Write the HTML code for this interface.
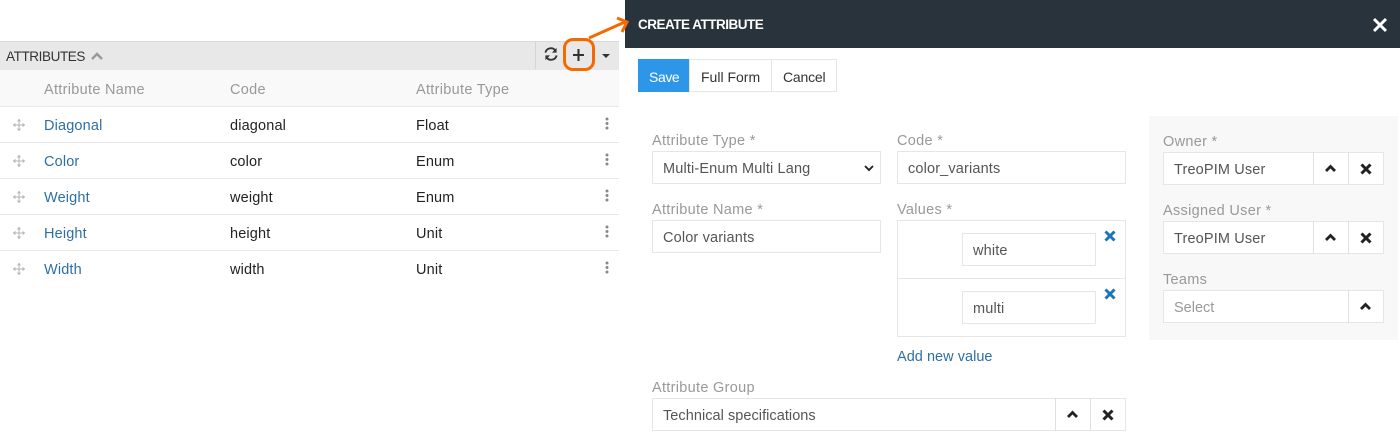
<!DOCTYPE html>
<html><head><meta charset="utf-8"><style>
html,body{margin:0;padding:0;background:#fff}
#p{position:relative;width:1400px;height:446px;overflow:hidden;background:#fff;font-family:"Liberation Sans",sans-serif;font-size:14.5px;color:#333}
#p div,#p span.t{position:absolute;box-sizing:border-box}
.t{white-space:nowrap;line-height:20px;letter-spacing:.15px;margin-top:1px}
.g{color:#999;letter-spacing:.3px}.l{color:#2f6fa5}.d{color:#555}.k{color:#222}
.bt{font-size:14px;letter-spacing:0}
.b{background:#fff;border:1px solid #e6e6e6}
.h{height:1px;background:#e8e8e8;left:0;width:619px}
svg{position:absolute;overflow:visible}
</style></head><body><div id="p">
<div style="left:0;top:41px;width:619px;height:29px;background:#e8e8e8;border-top:1px solid #d9d9d9"></div>
<div style="left:0;top:70px;width:619px;height:36px;background:#f9f9f9"></div>
<div class="h" style="top:106px"></div><div class="h" style="top:142px"></div><div class="h" style="top:178px"></div><div class="h" style="top:214px"></div><div class="h" style="top:250px"></div>
<span class="t" style="left:6px;top:46px;color:#333;font-size:13.5px;letter-spacing:-.4px">ATTRIBUTES</span>
<svg style="left:91px;top:52px" width="12" height="8"><path d="M1 7L6 2L11 7" fill="none" stroke="#999" stroke-width="2.400"/></svg>
<div style="left:535px;top:42px;width:1px;height:27px;background:#d5d5d5"></div>
<svg style="left:544px;top:47px" width="14" height="14" viewBox="0 0 15 15"><path d="M1.500 6A6 6 0 0 1 12 3.500M13.500 9A6 6 0 0 1 3 11.500" fill="none" stroke="#333" stroke-width="2"/><path d="M13.500 1V6H8.500zM1.500 14V9H6.500z" fill="#333"/></svg>
<svg style="left:573px;top:49px" width="11" height="12"><path d="M5.500 0V12M0 6H11" stroke="#333" stroke-width="2.100"/></svg>
<svg style="left:602px;top:54px" width="8" height="4"><path d="M0 0H8L4 4z" fill="#333"/></svg>
<div style="left:563px;top:38px;width:32px;height:33px;border:3px solid #f56a00;border-radius:10px"></div>

<span class="t g" style="left:44px;top:79px">Attribute Name</span><span class="t g" style="left:230px;top:79px">Code</span><span class="t g" style="left:416px;top:79px">Attribute Type</span>

<span class="t l" style="left:44px;top:115px">Diagonal</span><span class="t k" style="left:230px;top:115px">diagonal</span><span class="t k" style="left:416px;top:115px">Float</span>
<span class="t l" style="left:44px;top:151px">Color</span><span class="t k" style="left:230px;top:151px">color</span><span class="t k" style="left:416px;top:151px">Enum</span>
<span class="t l" style="left:44px;top:187px">Weight</span><span class="t k" style="left:230px;top:187px">weight</span><span class="t k" style="left:416px;top:187px">Enum</span>
<span class="t l" style="left:44px;top:223px">Height</span><span class="t k" style="left:230px;top:223px">height</span><span class="t k" style="left:416px;top:223px">Unit</span>
<span class="t l" style="left:44px;top:259px">Width</span><span class="t k" style="left:230px;top:259px">width</span><span class="t k" style="left:416px;top:259px">Unit</span>

<svg width="0" height="0" style="left:0;top:0"><defs>
<g id="mv"><path d="M6 1V11M1 6H11" stroke="#b5b5b5" stroke-width="1" fill="none"/><path d="M4.500 2.500L6 .5L7.500 2.500M4.500 9.500L6 11.500L7.500 9.500M2.500 4.500L.5 6L2.500 7.500M9.500 4.500L11.500 6L9.500 7.500" stroke="#b5b5b5" stroke-width="1" fill="none"/></g>
<g id="dots"><circle cx="2" cy="2" r="1.500" fill="#888"/><circle cx="2" cy="6.500" r="1.500" fill="#888"/><circle cx="2" cy="11" r="1.500" fill="#888"/></g>
<path id="up" d="M1 7L5.500 2.500L10 7" fill="none" stroke="#222" stroke-width="2.800"/>
<path id="x" d="M1.500 1.500L10.500 10.500M10.500 1.500L1.500 10.500" fill="none" stroke="#222" stroke-width="3"/>
</defs></svg>
<svg style="left:13px;top:119px" width="12" height="12"><use href="#mv"/></svg><svg style="left:13px;top:155px" width="12" height="12"><use href="#mv"/></svg><svg style="left:13px;top:191px" width="12" height="12"><use href="#mv"/></svg><svg style="left:13px;top:227px" width="12" height="12"><use href="#mv"/></svg><svg style="left:13px;top:263px" width="12" height="12"><use href="#mv"/></svg>
<svg style="left:605px;top:117px" width="4" height="13"><use href="#dots"/></svg><svg style="left:605px;top:153px" width="4" height="13"><use href="#dots"/></svg><svg style="left:605px;top:189px" width="4" height="13"><use href="#dots"/></svg><svg style="left:605px;top:225px" width="4" height="13"><use href="#dots"/></svg><svg style="left:605px;top:261px" width="4" height="13"><use href="#dots"/></svg>

<div style="left:625px;top:0;width:775px;height:48px;background:#29333b"></div>
<span class="t" style="left:638px;top:14px;color:#fff;font-weight:bold;font-size:13.5px;letter-spacing:-.5px">CREATE ATTRIBUTE</span>
<svg style="left:1373px;top:18px" width="14" height="14"><path d="M1 1L13 13M13 1L1 13" stroke="#fff" stroke-width="3"/></svg>
<svg style="left:585px;top:14px" width="45" height="30"><path d="M4 24L40 8" stroke="#f56a00" stroke-width="3" fill="none"/><path d="M32 4L42 8L37 18" stroke="#f56a00" stroke-width="3" fill="none"/></svg>

<div style="left:638px;top:59px;width:52px;height:33px;background:#2d96e8"></div>
<div class="b" style="left:689px;top:59px;width:83px;height:33px"></div>
<div class="b" style="left:771px;top:59px;width:66px;height:33px"></div>
<span class="t bt" style="left:649px;top:66px;color:#fff;letter-spacing:-.4px">Save</span>
<span class="t bt" style="left:701px;top:66px">Full Form</span>
<span class="t bt" style="left:783px;top:66px;letter-spacing:-.2px">Cancel</span>

<span class="t g" style="left:652px;top:130px">Attribute Type *</span>
<div class="b" style="left:652px;top:151px;width:229px;height:33px"></div>
<span class="t d" style="left:663px;top:158px">Multi-Enum Multi Lang</span>
<svg style="left:864px;top:165px" width="10" height="7"><path d="M1 1L5 5L9 1" fill="none" stroke="#222" stroke-width="1.900"/></svg>
<span class="t g" style="left:897px;top:130px">Code *</span>
<div class="b" style="left:897px;top:151px;width:229px;height:33px"></div>
<span class="t d" style="left:908px;top:158px">color_variants</span>

<span class="t g" style="left:652px;top:199px">Attribute Name *</span>
<div class="b" style="left:652px;top:220px;width:229px;height:33px"></div>
<span class="t d" style="left:663px;top:227px">Color variants</span>

<span class="t g" style="left:897px;top:199px">Values *</span>
<div class="b" style="left:897px;top:220px;width:229px;height:117px"></div>
<div style="left:898px;top:278px;width:227px;height:1px;background:#e6e6e6"></div>
<div class="b" style="left:962px;top:233px;width:134px;height:33px"></div>
<span class="t d" style="left:973px;top:240px">white</span>
<div class="b" style="left:962px;top:291px;width:134px;height:33px"></div>
<span class="t d" style="left:973px;top:298px">multi</span>
<svg style="left:1104px;top:230px" width="12" height="12"><path d="M1.500 1.500L10.500 10.500M10.500 1.500L1.500 10.500" fill="none" stroke="#1b75bb" stroke-width="3"/></svg>
<svg style="left:1104px;top:288px" width="12" height="12"><path d="M1.500 1.500L10.500 10.500M10.500 1.500L1.500 10.500" fill="none" stroke="#1b75bb" stroke-width="3"/></svg>
<span class="t l" style="left:897px;top:346px;letter-spacing:.03px">Add new value</span>

<span class="t g" style="left:652px;top:377px">Attribute Group</span>
<div class="b" style="left:652px;top:398px;width:474px;height:33px"></div>
<div style="left:1055px;top:398px;width:1px;height:33px;background:#e0e0e0"></div>
<div style="left:1090px;top:398px;width:1px;height:33px;background:#e0e0e0"></div>
<span class="t d" style="left:663px;top:405px;letter-spacing:.05px">Technical specifications</span>
<svg style="left:1067px;top:410px" width="11" height="9"><use href="#up"/></svg>
<svg style="left:1102px;top:409px" width="12" height="12"><use href="#x"/></svg>

<div style="left:1149px;top:116px;width:249px;height:224px;background:#f8f8f8"></div>
<span class="t g" style="left:1163px;top:131px">Owner *</span>
<div class="b" style="left:1163px;top:152px;width:221px;height:33px"></div>
<div style="left:1313px;top:152px;width:1px;height:33px;background:#e0e0e0"></div><div style="left:1348px;top:152px;width:1px;height:33px;background:#e0e0e0"></div>
<span class="t d" style="left:1174px;top:159px">TreoPIM User</span>
<svg style="left:1325px;top:164px" width="11" height="9"><use href="#up"/></svg>
<svg style="left:1360px;top:163px" width="12" height="12"><use href="#x"/></svg>

<span class="t g" style="left:1163px;top:200px">Assigned User *</span>
<div class="b" style="left:1163px;top:221px;width:221px;height:33px"></div>
<div style="left:1313px;top:221px;width:1px;height:33px;background:#e0e0e0"></div><div style="left:1348px;top:221px;width:1px;height:33px;background:#e0e0e0"></div>
<span class="t d" style="left:1174px;top:228px">TreoPIM User</span>
<svg style="left:1325px;top:233px" width="11" height="9"><use href="#up"/></svg>
<svg style="left:1360px;top:232px" width="12" height="12"><use href="#x"/></svg>

<span class="t g" style="left:1163px;top:269px">Teams</span>
<div class="b" style="left:1163px;top:290px;width:221px;height:33px"></div>
<div style="left:1348px;top:290px;width:1px;height:33px;background:#e0e0e0"></div>
<span class="t g" style="left:1174px;top:297px;letter-spacing:0">Select</span>
<svg style="left:1360px;top:302px" width="11" height="9"><use href="#up"/></svg>
</div></body></html>
